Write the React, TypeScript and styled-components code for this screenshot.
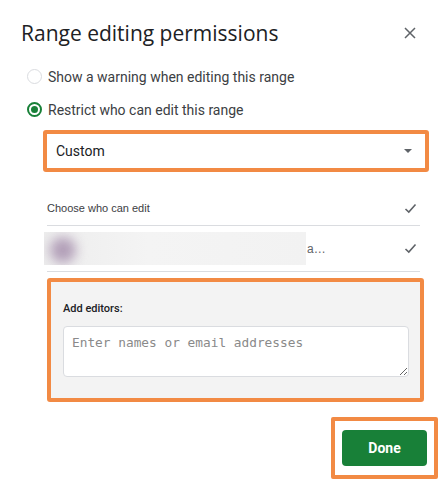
import React from "react";
import styled, { createGlobalStyle } from "styled-components";

const Global = createGlobalStyle`
  html, body { margin: 0; padding: 0; background: #fff; }
  body { font-family: Roboto, "Liberation Sans", Arial, sans-serif; color: #202124; }
  * { box-sizing: border-box; }
`;

const ORANGE = "#f28a44";

const Dialog = styled.div`
  width: 448px;
  height: 489px;
  padding: 16px 0 0 21px;
  display: flex;
  flex-direction: column;
  background: #fff;
`;

const Header = styled.div`
  display: flex;
  align-items: center;
  justify-content: space-between;
  height: 34px;
  padding-right: 31px;
`;

const Title = styled.h1`
  margin: 0;
  font-family: "Open Sans", Roboto, sans-serif;
  font-weight: 400;
  font-size: 21px;
  line-height: 28px;
  color: #202124;
`;

const Close = styled.button`
  border: 0;
  background: transparent;
  padding: 0;
  width: 14px;
  height: 14px;
  display: flex;
  align-items: center;
  justify-content: center;
`;

const Options = styled.div`
  display: flex;
  flex-direction: column;
  margin-top: 10px;
  padding-left: 6px;
`;

const RadioRow = styled.label`
  display: flex;
  align-items: center;
  height: 33px;
  gap: 6px;
  font-size: 14px;
  color: #3c4043;
`;

const Radio = styled.span<{ $on?: boolean }>`
  width: 15px;
  height: 15px;
  border-radius: 50%;
  border-style: solid;
  border-color: ${(p) => (p.$on ? "#188038" : "#dadce0")};
  border-width: ${(p) => (p.$on ? "2px" : "1px")};
  display: flex;
  align-items: center;
  justify-content: center;
  &::after {
    content: "";
    width: 7px;
    height: 7px;
    border-radius: 50%;
    background: ${(p) => (p.$on ? "#188038" : "transparent")};
  }
`;

const Body = styled.div`
  display: flex;
  flex-direction: column;
  padding-left: 22px;
  padding-right: 19px;
`;

const Highlight = styled.div`
  border: 4px solid ${ORANGE};
  border-radius: 3px;
`;

const SelectBox = styled(Highlight)`
  margin-top: 4px;
`;

const Select = styled.div`
  height: 34px;
  display: flex;
  align-items: center;
  justify-content: space-between;
  padding: 0 13px 0 9px;
  font-size: 14px;
  color: #202124;
  background: #fff;
`;

const Caret = styled.span`
  width: 0;
  height: 0;
  border-left: 4px solid transparent;
  border-right: 4px solid transparent;
  border-top: 4px solid #5f6368;
`;

const List = styled.div`
  display: flex;
  flex-direction: column;
  margin-top: 19px;
  padding: 0 9px 0 4px;
`;

const Row = styled.div<{ $tall?: boolean }>`
  display: flex;
  align-items: center;
  justify-content: space-between;
  height: ${(p) => (p.$tall ? "46px" : "35px")};
  border-bottom: 1px solid #dadce0;
  font-size: 11px;
  color: #3c4043;
  font-family: "Liberation Sans", Arial, sans-serif;
  padding-right: 3px;
`;

const Person = styled.div`
  display: flex;
  align-items: center;
  margin-left: -3px;
`;

const Blur = styled.div`
  width: 262px;
  height: 33px;
  background: linear-gradient(90deg, #ededed 0%, #f4f4f4 40%, #f2f2f2 100%);
  position: relative;
  overflow: hidden;
`;

const Avatar = styled.span`
  position: absolute;
  left: 6px;
  top: 5px;
  width: 26px;
  height: 26px;
  border-radius: 50%;
  background: #b29fb8;
  filter: blur(6px);
`;

const Ellipsis = styled.span`
  font-size: 12px;
  color: #5f6368;
  margin-left: 1px;
`;

const EditorsBox = styled(Highlight)`
  margin-top: 6px;
  margin-left: 4px;
  margin-right: 5px;
`;

const EditorsInner = styled.div`
  background: #f3f3f3;
  padding: 20px 11px 21px 12px;
  display: flex;
  flex-direction: column;
`;

const Label = styled.div`
  font-size: 11px;
  font-weight: 500;
  color: #202124;
  font-family: Roboto, sans-serif;
  margin-bottom: 11px;
`;

const Textarea = styled.textarea`
  height: 51px;
  width: 100%;
  resize: vertical;
  border: 1px solid #dadce0;
  border-radius: 4px;
  background: #fff;
  padding: 8px 8px;
  font-family: "DejaVu Sans Mono", "Liberation Mono", monospace;
  font-size: 12.8px;
  color: #202124;
  outline: none;
  &::placeholder { color: #8a8a8a; }
`;

const Footer = styled.div`
  display: flex;
  justify-content: flex-end;
  margin-top: 15px;
  padding-right: 10px;
`;

const DoneWrap = styled(Highlight)`
  padding: 9px 7px;
  border-radius: 2px;
`;

const Done = styled.button`
  width: 85px;
  height: 36px;
  border: 0;
  border-radius: 4px;
  background: #188038;
  color: #fff;
  font-family: Roboto, sans-serif;
  font-weight: 700;
  font-size: 14px;
`;

const Check = () => (
  <svg width="13" height="11" viewBox="0 0 13 11">
    <path d="M1.5 6 L4.8 9 L11.5 1.5" stroke="#5f6368" strokeWidth="1.6" fill="none" />
  </svg>
);

export default function App() {
  return (
    <>
      <Global />
      <Dialog>
        <Header>
          <Title>Range editing permissions</Title>
          <Close aria-label="Close">
            <svg width="12" height="12" viewBox="0 0 12 12">
              <path d="M1 1 L11 11 M11 1 L1 11" stroke="#5f6368" strokeWidth="1.5" />
            </svg>
          </Close>
        </Header>
        <Options>
          <RadioRow>
            <Radio />
            Show a warning when editing this range
          </RadioRow>
          <RadioRow>
            <Radio $on />
            Restrict who can edit this range
          </RadioRow>
        </Options>
        <Body>
          <SelectBox>
            <Select>
              Custom
              <Caret />
            </Select>
          </SelectBox>
          <List>
            <Row>
              Choose who can edit
              <Check />
            </Row>
            <Row $tall>
              <Person>
                <Blur>
                  <Avatar />
                </Blur>
                <Ellipsis>a…</Ellipsis>
              </Person>
              <Check />
            </Row>
          </List>
          <EditorsBox>
            <EditorsInner>
              <Label>Add editors:</Label>
              <Textarea placeholder="Enter names or email addresses" />
            </EditorsInner>
          </EditorsBox>
        </Body>
        <Footer>
          <DoneWrap>
            <Done>Done</Done>
          </DoneWrap>
        </Footer>
      </Dialog>
    </>
  );
}
